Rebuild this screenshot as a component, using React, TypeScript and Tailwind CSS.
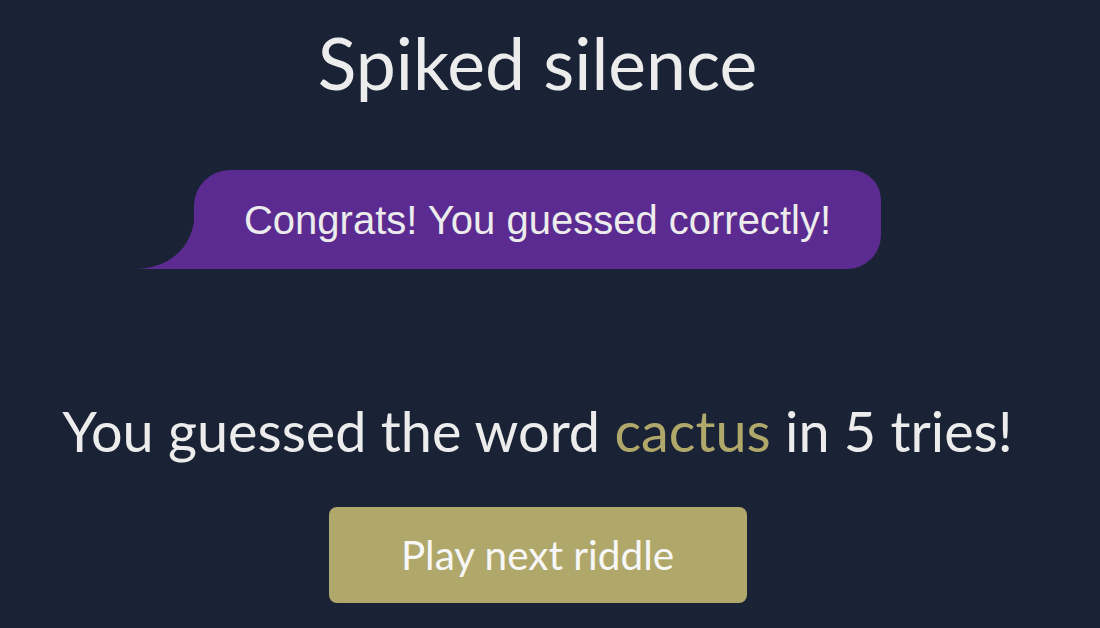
import React from "react";

const dosis = { fontFamily: "Lato, 'Noto Sans', sans-serif" };

export default function App() {
  return (
    <div className="min-h-[628px] w-full bg-[#1a2235] flex overflow-hidden">
      <div className="w-[1075px] flex flex-col items-center">
        <h1
          className="mt-[19px] text-[71.5px] leading-[86px] text-[#ececec] font-normal"
          style={dosis}
        >
          Spiked silence
        </h1>
        <div className="relative mt-[65px] w-[687px] h-[99px] bg-[#5b2b91] rounded-tl-[36px] rounded-tr-[30px] rounded-br-[34px] flex items-center justify-center">
          <svg
            className="absolute left-[-59px] bottom-0"
            width="60"
            height="60"
            viewBox="0 0 60 60"
          >
            <path d="M0 60 C30 60 60 42 60 0 L60 60 Z" fill="#5b2b91" />
          </svg>
          <span
            className="text-[40px] leading-none text-[#ececec] whitespace-nowrap"
            style={{ fontFamily: "'Liberation Sans', Arial, sans-serif" }}
          >
            Congrats! You guessed correctly!
          </span>
        </div>
        <p
          className="mt-[128px] text-[55.8px] leading-[67px] text-[#ececec] whitespace-nowrap"
          style={dosis}
        >
          You guessed the word <span className="text-[#b0a76b]">cactus</span> in 5 tries!
        </p>
        <button
          className="mt-[43px] w-[418px] h-[96px] rounded-[8px] bg-[#b0a76b] text-[40.5px] text-[#f7f7f7] flex items-center justify-center"
          style={dosis}
        >
          Play next riddle
        </button>
      </div>
    </div>
  );
}
